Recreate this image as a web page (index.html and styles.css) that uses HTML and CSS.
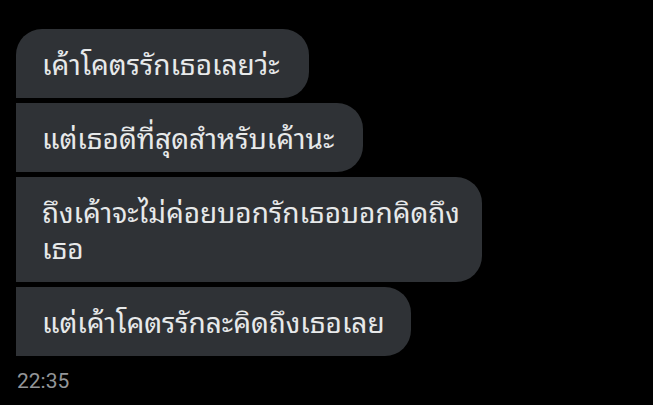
FILE: index.html
```html
<!DOCTYPE html>
<html lang="th">
<head>
<meta charset="utf-8">
<link rel="stylesheet" href="styles.css">
</head>
<body>
<div class="chat">
  <div class="bubble first">เค้าโคตรรักเธอเลยว่ะ</div>
  <div class="bubble second">แต่เธอดีที่สุดสำหรับเค้านะ</div>
  <div class="bubble wide">ถึงเค้าจะไม่ค่อยบอกรักเธอบอกคิดถึง<br>เธอ</div>
  <div class="bubble">แต่เค้าโคตรรักละคิดถึงเธอเลย</div>
  <div class="time">22:35</div>
</div>
</body>
</html>
```
FILE: styles.css
```css
html, body {
  margin: 0;
  padding: 0;
  background: #000;
  width: 653px;
  height: 405px;
  overflow: hidden;
}
.chat {
  display: flex;
  flex-direction: column;
  align-items: flex-start;
  gap: 5px;
  padding: 29px 0 0 16px;
}
.bubble {
  background: #2f3236;
  color: #e7e9ea;
  font-family: "Noto Sans Thai Looped", "Noto Sans", sans-serif;
  font-size: 28px;
  line-height: 36px;
  padding: 16px 26px 17px 26px;
  border-radius: 0 26px 26px 0;
  white-space: nowrap;
}
.bubble.first {
  border-radius: 26px 26px 26px 0;
  padding-right: 30px;
}
.bubble.second {
  padding-right: 29px;
}
.bubble.wide {
  padding-right: 22px;
}
.time {
  margin-top: 7px;
  font-family: Roboto, "Liberation Sans", sans-serif;
  font-size: 21px;
  line-height: 26px;
  color: #939598;
  padding-left: 1px;
}
```
